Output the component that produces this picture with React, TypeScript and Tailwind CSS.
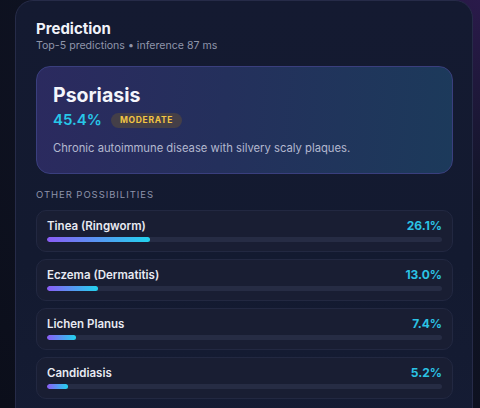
import React from "react";

const others = [
  { name: "Tinea (Ringworm)", pct: 26.1 },
  { name: "Eczema (Dermatitis)", pct: 13.0 },
  { name: "Lichen Planus", pct: 7.4 },
  { name: "Candidiasis", pct: 5.2 },
];

export default function App() {
  return (
    <div
      className="w-[480px] h-[408px] overflow-hidden bg-[radial-gradient(ellipse_at_top_right,#2a1a4a_0%,#111527_35%,#0b0e1a_100%)] pl-[15px] pr-[7px]"
      style={{ fontFamily: "Inter, 'Noto Sans', sans-serif" }}
    >
      <div className="h-[440px] rounded-[18px] border border-[#262b48] bg-[linear-gradient(180deg,#141a31_0%,#131a30_60%,#151c34_100%)] pl-5 pr-[19px] pt-[18px]">
        <h2 className="text-[15px] leading-[20px] font-bold text-[#f1f3fa]">Prediction</h2>
        <p className="text-[10.6px] leading-[14px] text-[#8f95aa]">
          Top-5 predictions • inference 87 ms
        </p>

        <div className="mt-[13px] h-[108px] rounded-[14px] border border-[#3a3f7e] bg-[linear-gradient(95deg,#2b2a5f_0%,#24305c_45%,#1c3a5b_100%)] px-4 pt-[14px]">
          <div className="text-[19.5px] leading-[28px] font-bold text-[#f4f5fb]">Psoriasis</div>
          <div className="flex items-center gap-[9px]">
            <span className="text-[15px] leading-[22px] font-semibold text-[#27c6e8]">45.4%</span>
            <span className="rounded-full bg-[#443f48] px-[9px] h-[15px] flex items-center text-[8.5px] font-bold tracking-[0.08em] text-[#f2c443]">
              MODERATE
            </span>
          </div>
          <p className="mt-[8px] text-[11.25px] leading-[18px] text-[#b3b8cf]">
            Chronic autoimmune disease with silvery scaly plaques.
          </p>
        </div>

        <div className="mt-[14px] text-[9.5px] leading-[14px] tracking-[0.1em] text-[#8e94ab]">
          OTHER POSSIBILITIES
        </div>

        <div className="mt-[8px] flex flex-col gap-[7px]">
          {others.map((o) => (
            <div
              key={o.name}
              className="h-[42px] rounded-[10px] border border-[#222841] bg-[#191e33] px-[10px] pt-[6px]"
            >
              <div className="flex items-center justify-between">
                <span className="text-[11.5px] leading-[18px] font-semibold text-[#e8eaf2]">{o.name}</span>
                <span className="text-[12px] leading-[18px] font-bold text-[#2bc3e4]">
                  {o.pct.toFixed(1)}%
                </span>
              </div>
              <div className="mt-[2px] h-[5px] rounded-full bg-[#262c44] overflow-hidden">
                <div
                  className="h-full rounded-full bg-[linear-gradient(90deg,#8b5cf6,#22d3ee)]"
                  style={{ width: `${o.pct}%` }}
                />
              </div>
            </div>
          ))}
        </div>
      </div>
    </div>
  );
}
